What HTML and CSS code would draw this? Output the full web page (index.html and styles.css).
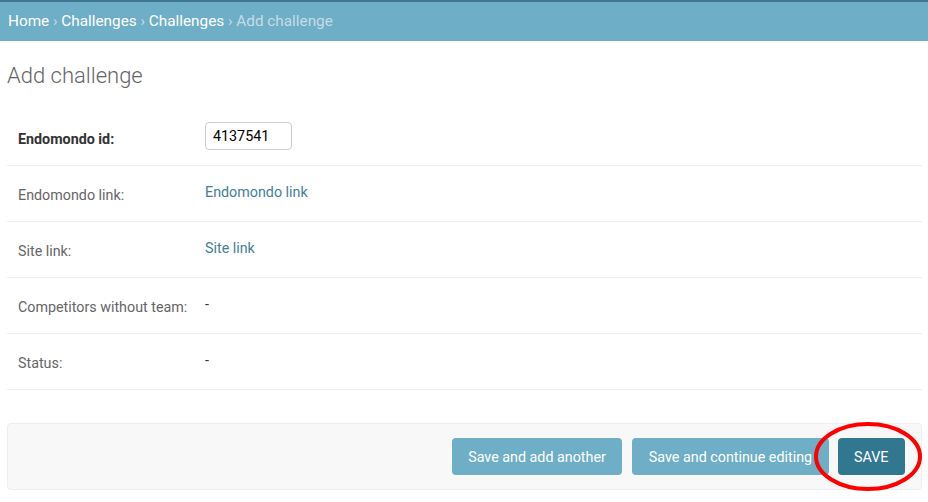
FILE: index.html
```html
<!DOCTYPE html>
<html>
<head>
<meta charset="utf-8">
<link rel="stylesheet" href="styles.css">
</head>
<body>
<div class="topline"></div>
<div class="breadcrumbs">
  <a href="#">Home</a> <span class="sep">›</span> <a href="#">Challenges</a> <span class="sep">›</span> <a href="#">Challenges</a> <span class="sep">›</span> <span class="current">Add challenge</span>
</div>
<div class="content">
  <h1>Add challenge</h1>
  <div class="form">
    <div class="row">
      <label class="label required">Endomondo id:</label>
      <div class="field"><input class="input" type="text" value="4137541"></div>
    </div>
    <div class="row">
      <label class="label">Endomondo link:</label>
      <div class="value"><a href="#">Endomondo link</a></div>
    </div>
    <div class="row">
      <label class="label">Site link:</label>
      <div class="value"><a href="#">Site link</a></div>
    </div>
    <div class="row">
      <label class="label">Competitors without team:</label>
      <div class="value">-</div>
    </div>
    <div class="row">
      <label class="label">Status:</label>
      <div class="value">-</div>
    </div>
  </div>
  <div class="submit-row">
    <button class="btn">Save and add another</button>
    <button class="btn">Save and continue editing</button>
    <button class="btn default">SAVE</button>
  </div>
</div>
<svg class="annotation" width="928" height="502" viewBox="0 0 928 502">
  <ellipse cx="868" cy="456.5" rx="52" ry="32.5" fill="none" stroke="#ff0000" stroke-width="4"/>
</svg>
</body>
</html>
```

FILE: styles.css
```css
html, body {
  margin: 0;
  padding: 0;
  background: #fff;
  font-family: Roboto, "Liberation Sans", sans-serif;
  color: #333;
}
.topline {
  height: 2px;
  background: #417690;
}
.breadcrumbs {
  background: #6eaec7;
  height: 39px;
  line-height: 38px;
  padding: 0 8px;
  font-size: 15.3px;
  color: #c4dce8;
}
.breadcrumbs a {
  color: #fff;
  text-decoration: none;
}
.breadcrumbs .sep {
  color: #c4dce8;
}
.breadcrumbs .current {
  color: #c4dce8;
}
.content {
  padding: 0 6px 0 7px;
}
h1 {
  margin: 0;
  padding-top: 22px;
  height: 47px;
  font-size: 22px;
  font-weight: 300;
  color: #666;
  line-height: 26px;
}
.row {
  display: flex;
  height: 55px;
  border-bottom: 1px solid #eee;
  padding: 0 11px;
  font-size: 14.3px;
}
.label {
  width: 187px;
  flex: none;
  color: #666;
  padding-top: 20px;
  line-height: 18px;
}
.label.required {
  font-weight: bold;
  color: #333;
}
.field {
  padding-top: 12px;
}
.input {
  box-sizing: border-box;
  width: 87px;
  height: 28px;
  border: 1px solid #ccc;
  border-radius: 4px;
  padding: 2px 7px;
  font-family: Roboto, "Liberation Sans", sans-serif;
  font-size: 14.3px;
  color: #000;
}
.value {
  padding-top: 17px;
  line-height: 18px;
  color: #333;
}
.value a {
  color: #447e9b;
  text-decoration: none;
}
.submit-row {
  margin-top: 33px;
  background: #f8f8f8;
  border: 1px solid #eee;
  border-radius: 4px;
  height: 65px;
  padding: 0 16px;
  display: flex;
  justify-content: flex-end;
  align-items: center;
  gap: 10px;
}
.btn {
  height: 37px;
  border: none;
  border-radius: 4px;
  background: #6eaec7;
  color: #fff;
  font-family: Roboto, "Liberation Sans", sans-serif;
  font-size: 14.3px;
  padding: 0 16.5px;
}
.btn.default {
  background: #30778f;
  margin-left: -1px;
}
.annotation {
  position: absolute;
  left: 0;
  top: 0;
  pointer-events: none;
}
```
